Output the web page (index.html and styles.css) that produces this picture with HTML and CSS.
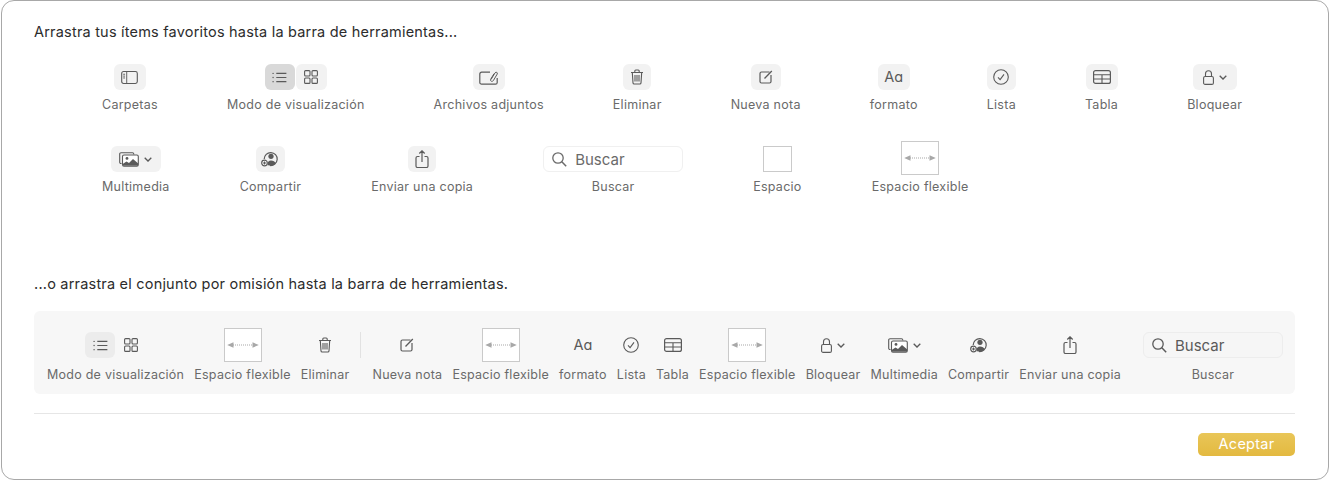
FILE: index.html
```html
<!DOCTYPE html>
<html lang="es">
  <head>
    <meta charset="UTF-8" />
    <meta name="viewport" content="width=device-width, initial-scale=1.0" />
    <title>Personalizar barra de herramientas</title>
    <link rel="stylesheet" href="styles.css">
  </head>
  <body>
    <svg class="sprite" width="0" height="0">
      <symbol id="i-sidebar" viewBox="0 0 18 14">
        <rect x="0.6" y="0.6" width="16.8" height="12.8" rx="2" fill="none" stroke="currentColor" stroke-width="1.2"></rect>
        <path d="M6 1v12M2.2 3.5h2M2.2 5.5h2M2.2 7.5h2" fill="none" stroke="currentColor" stroke-width="1"></path>
      </symbol>
      <symbol id="i-list" viewBox="0 0 16 12">
        <path d="M4.5 1.5h11M4.5 6h11M4.5 10.5h11" fill="none" stroke="currentColor" stroke-width="1.2"></path>
        <circle cx="1" cy="1.5" r="0.8" fill="currentColor"></circle>
        <circle cx="1" cy="6" r="0.8" fill="currentColor"></circle>
        <circle cx="1" cy="10.5" r="0.8" fill="currentColor"></circle>
      </symbol>
      <symbol id="i-grid" viewBox="0 0 14 14">
        <g fill="none" stroke="currentColor" stroke-width="1.1">
          <rect x="0.6" y="0.6" width="5.4" height="5.4" rx="1"></rect>
          <rect x="8" y="0.6" width="5.4" height="5.4" rx="1"></rect>
          <rect x="0.6" y="8" width="5.4" height="5.4" rx="1"></rect>
          <rect x="8" y="8" width="5.4" height="5.4" rx="1"></rect>
        </g>
      </symbol>
      <symbol id="i-attach" viewBox="0 0 19 15">
        <path d="M11 2.2H2.600A1.800 1.800 0 0 0 .8 4v8.400a1.800 1.800 0 0 0 1.800 1.800h13.800a1.800 1.800 0 0 0 1.800-1.800V8" fill="none" stroke="currentColor" stroke-width="1.2"></path>
        <path d="M12 9.500l4-6.600c1-1.500 3-.4 2.200 1.200l-3.800 6.400c-1.200 1.800-3.600.6-2.700-1.300l3.300-5.500" fill="none" stroke="currentColor" stroke-width="1"></path>
      </symbol>
      <symbol id="i-trash" viewBox="0 0 14 16">
        <path d="M1 3.500h12M4.800 3.300V2a1 1 0 0 1 1-1h2.400a1 1 0 0 1 1 1v1.300M2.300 3.500l.7 10.400a1.200 1.200 0 0 0 1.200 1.100h5.600a1.200 1.200 0 0 0 1.200-1.100l.7-10.400M5 6v6.500M7 6v6.500M9 6v6.500" fill="none" stroke="currentColor" stroke-width="1.1"></path>
      </symbol>
      <symbol id="i-note" viewBox="0 0 14 14">
        <path d="M10.500 2H2.500A1.500 1.500 0 0 0 1 3.500v8A1.500 1.500 0 0 0 2.500 13h8a1.500 1.500 0 0 0 1.500-1.500V5" fill="none" stroke="currentColor" stroke-width="1.2"></path>
        <path d="M5.500 8.500L12.800 1" fill="none" stroke="currentColor" stroke-width="1.3"></path>
      </symbol>
      <symbol id="i-check" viewBox="0 0 16 16">
        <circle cx="8" cy="8" r="7.3" fill="none" stroke="currentColor" stroke-width="1.1"></circle>
        <path d="M5 8.300l2.100 2.400L11 5.400" fill="none" stroke="currentColor" stroke-width="1.1"></path>
      </symbol>
      <symbol id="i-table" viewBox="0 0 18 14">
        <rect x="0.6" y="0.6" width="16.8" height="12.8" rx="2" fill="none" stroke="currentColor" stroke-width="1.2"></rect>
        <path d="M1 4.800h16M1 9h16M9 4.800V13.400" fill="none" stroke="currentColor" stroke-width="1.1"></path>
      </symbol>
      <symbol id="i-lock" viewBox="0 0 11 15">
        <rect x="0.6" y="6.5" width="9.8" height="7.9" rx="1.5" fill="none" stroke="currentColor" stroke-width="1.1"></rect>
        <path d="M2.500 6.500V3.800a3 3 0 0 1 6 0v2.700" fill="none" stroke="currentColor" stroke-width="1.1"></path>
      </symbol>
      <symbol id="i-chevron" viewBox="0 0 8 5">
        <path d="M0.700 0.800L4 4 7.300 0.800" fill="none" stroke="currentColor" stroke-width="1.3"></path>
      </symbol>
      <symbol id="i-media" viewBox="0 0 20 15">
        <path d="M2.500 11.500H2A1.300 1.300 0 0 1 0.700 10.200V2A1.300 1.300 0 0 1 2 0.700h11.500A1.300 1.300 0 0 1 14.800 2v.5" fill="none" stroke="currentColor" stroke-width="1.1"></path>
        <rect x="3.5" y="3" width="15.8" height="11.3" rx="1.5" fill="#fff" stroke="currentColor" stroke-width="1.1"></rect>
        <path d="M4 13.800v-2l3.500-2.400 2.500 1.500 4-3.800 5 4.200v2.500z" fill="currentColor"></path>
        <circle cx="8" cy="6.4" r="1.4" fill="currentColor"></circle>
      </symbol>
      <symbol id="i-share" viewBox="0 0 18 16">
        <path d="M3.200 8A6.500 6.500 0 1 1 9 14.500" fill="none" stroke="currentColor" stroke-width="1.2"></path>
        <circle cx="10" cy="5.3" r="2.6" fill="currentColor"></circle>
        <path d="M5.800 14c.3-3 2.200-4.600 4.200-4.600 2.200 0 4 1.200 4.900 2.700-1.200 1.600-3 2.600-5 2.600z" fill="currentColor"></path>
        <circle cx="3.5" cy="12" r="3.4" fill="#fff"></circle>
        <circle cx="3.5" cy="12" r="2.8" fill="none" stroke="currentColor" stroke-width="1.2"></circle>
        <path d="M2 12h3M3.500 10.500v3" fill="none" stroke="currentColor" stroke-width="1.1"></path>
      </symbol>
      <symbol id="i-send" viewBox="0 0 14 18">
        <path d="M4.500 6.500H2.500A1.500 1.500 0 0 0 1 8v8a1.500 1.500 0 0 0 1.500 1.500h9A1.500 1.500 0 0 0 13 16V8a1.500 1.500 0 0 0-1.500-1.500h-2M7 12V1M4.300 3.500L7 0.800l2.700 2.700" fill="none" stroke="currentColor" stroke-width="1.2"></path>
      </symbol>
      <symbol id="i-search" viewBox="0 0 15 15">
        <circle cx="6" cy="6" r="5.2" fill="none" stroke="currentColor" stroke-width="1.3"></circle>
        <path d="M9.800 9.800L14.200 14.200" fill="none" stroke="currentColor" stroke-width="1.5"></path>
      </symbol>
      <symbol id="i-flex" viewBox="0 0 32 8">
        <path d="M6 4h20" fill="none" stroke="currentColor" stroke-width="1.1" stroke-dasharray="1 1"></path>
        <path d="M0.200 4L6.500 1.300v5.400zM31.800 4L25.500 1.300v5.400z" fill="currentColor"></path>
      </symbol>
    </svg>

    <main class="sheet">
      <h2 class="lead">Arrastra tus ítems favoritos hasta la barra de herramientas...</h2>

      <div class="palette">
        <div class="palette-row">
          <div class="tool">
            <div class="btn w32"><svg class="ic" width="17" height="13"><use href="#i-sidebar"></use></svg></div>
            <span class="label">Carpetas</span>
          </div>
          <div class="tool">
            <div class="seg">
              <div class="btn w30 on"><svg class="ic" width="15" height="11"><use href="#i-list"></use></svg></div>
              <div class="btn w31"><svg class="ic" width="14" height="14"><use href="#i-grid"></use></svg></div>
            </div>
            <span class="label">Modo de visualización</span>
          </div>
          <div class="tool">
            <div class="btn w32"><svg class="ic" width="19" height="15"><use href="#i-attach"></use></svg></div>
            <span class="label">Archivos adjuntos</span>
          </div>
          <div class="tool">
            <div class="btn w28"><svg class="ic" width="14" height="16"><use href="#i-trash"></use></svg></div>
            <span class="label">Eliminar</span>
          </div>
          <div class="tool">
            <div class="btn w30"><svg class="ic" width="14" height="14"><use href="#i-note"></use></svg></div>
            <span class="label">Nueva nota</span>
          </div>
          <div class="tool">
            <div class="btn w32"><span class="aa">Aɑ</span></div>
            <span class="label">formato</span>
          </div>
          <div class="tool">
            <div class="btn w29"><svg class="ic" width="16" height="16"><use href="#i-check"></use></svg></div>
            <span class="label">Lista</span>
          </div>
          <div class="tool">
            <div class="btn w32"><svg class="ic" width="18" height="14"><use href="#i-table"></use></svg></div>
            <span class="label">Tabla</span>
          </div>
          <div class="tool">
            <div class="btn w44">
              <svg class="ic" width="11" height="15"><use href="#i-lock"></use></svg>
              <svg class="ic" width="8" height="5"><use href="#i-chevron"></use></svg>
            </div>
            <span class="label">Bloquear</span>
          </div>
        </div>

        <div class="palette-row palette-row-wide">
          <div class="tool">
            <div class="btn w50">
              <svg class="ic" width="20" height="15"><use href="#i-media"></use></svg>
              <svg class="ic" width="8" height="5"><use href="#i-chevron"></use></svg>
            </div>
            <span class="label">Multimedia</span>
          </div>
          <div class="tool">
            <div class="btn w29"><svg class="ic" width="18" height="16"><use href="#i-share"></use></svg></div>
            <span class="label">Compartir</span>
          </div>
          <div class="tool">
            <div class="btn w28"><svg class="ic" width="14" height="18"><use href="#i-send"></use></svg></div>
            <span class="label">Enviar una copia</span>
          </div>
          <div class="tool">
            <div class="search">
              <svg class="ic" width="15" height="15"><use href="#i-search"></use></svg>
              <span>Buscar</span>
            </div>
            <span class="label">Buscar</span>
          </div>
          <div class="tool">
            <div class="space"></div>
            <span class="label">Espacio</span>
          </div>
          <div class="tool">
            <div class="space flex"><svg class="arrows" width="32" height="8"><use href="#i-flex"></use></svg></div>
            <span class="label">Espacio flexible</span>
          </div>
        </div>
      </div>

      <h2 class="lead lead-set">...o arrastra el conjunto por omisión hasta la barra de herramientas.</h2>

      <div class="toolbar">
        <div class="tool">
          <div class="seg">
            <div class="btn w30 on-light"><svg class="ic" width="15" height="11"><use href="#i-list"></use></svg></div>
            <div class="btn w30 bare"><svg class="ic" width="14" height="14"><use href="#i-grid"></use></svg></div>
          </div>
          <span class="label">Modo de visualización</span>
        </div>
        <div class="tool">
          <div class="space flex"><svg class="arrows" width="32" height="8"><use href="#i-flex"></use></svg></div>
          <span class="label">Espacio flexible</span>
        </div>
        <div class="tool">
          <div class="btn w28 bare"><svg class="ic" width="14" height="16"><use href="#i-trash"></use></svg></div>
          <span class="label">Eliminar</span>
        </div>
        <div class="divider"></div>
        <div class="tool">
          <div class="btn w30 bare"><svg class="ic" width="14" height="14"><use href="#i-note"></use></svg></div>
          <span class="label">Nueva nota</span>
        </div>
        <div class="tool">
          <div class="space flex"><svg class="arrows" width="32" height="8"><use href="#i-flex"></use></svg></div>
          <span class="label">Espacio flexible</span>
        </div>
        <div class="tool">
          <div class="btn w32 bare"><span class="aa">Aɑ</span></div>
          <span class="label">formato</span>
        </div>
        <div class="tool">
          <div class="btn w29 bare"><svg class="ic" width="16" height="16"><use href="#i-check"></use></svg></div>
          <span class="label">Lista</span>
        </div>
        <div class="tool">
          <div class="btn w32 bare"><svg class="ic" width="18" height="14"><use href="#i-table"></use></svg></div>
          <span class="label">Tabla</span>
        </div>
        <div class="tool">
          <div class="space flex"><svg class="arrows" width="32" height="8"><use href="#i-flex"></use></svg></div>
          <span class="label">Espacio flexible</span>
        </div>
        <div class="tool">
          <div class="btn w44 bare">
            <svg class="ic" width="11" height="15"><use href="#i-lock"></use></svg>
            <svg class="ic" width="8" height="5"><use href="#i-chevron"></use></svg>
          </div>
          <span class="label">Bloquear</span>
        </div>
        <div class="tool">
          <div class="btn w50 bare">
            <svg class="ic" width="20" height="15"><use href="#i-media"></use></svg>
            <svg class="ic" width="8" height="5"><use href="#i-chevron"></use></svg>
          </div>
          <span class="label">Multimedia</span>
        </div>
        <div class="tool">
          <div class="btn w29 bare"><svg class="ic" width="18" height="16"><use href="#i-share"></use></svg></div>
          <span class="label">Compartir</span>
        </div>
        <div class="tool">
          <div class="btn w28 bare"><svg class="ic" width="14" height="18"><use href="#i-send"></use></svg></div>
          <span class="label">Enviar una copia</span>
        </div>
        <div class="tool tool-search">
          <div class="search search-dim">
            <svg class="ic" width="15" height="15"><use href="#i-search"></use></svg>
            <span>Buscar</span>
          </div>
          <span class="label">Buscar</span>
        </div>
      </div>

      <hr class="rule" />

      <div class="actions">
        <button class="accept">Aceptar</button>
      </div>
    </main>
  </body>
</html>
```

FILE: styles.css
```css
* {
  box-sizing: border-box;
}
html,
body {
  height: 100%;
}
body {
  margin: 0;
  background: #fff;
  font-family: Inter, "Liberation Sans", sans-serif;
  overflow: hidden;
}
.sprite {
  display: block;
}
.sheet {
  width: 1328px;
  height: 480px;
  margin-left: 1px;
  padding: 22px 33px 0 32px;
  background: #fff;
  border: 1px solid #a8a8a8;
  border-radius: 13px;
}
.lead {
  margin: 0;
  height: 17px;
  font-size: 14.5px;
  font-weight: 400;
  line-height: 17px;
  letter-spacing: 0.2px;
  color: #2c2c2c;
}
.lead-set {
  margin-top: 47px;
}
.palette {
  padding: 24px 0 0 68px;
}
.palette-row {
  display: flex;
  gap: 69px;
  height: 82px;
}
.palette-row-wide {
  gap: 70px;
}
.tool {
  display: flex;
  flex-direction: column;
  align-items: center;
}
.label {
  margin-top: 7px;
  font-size: 12.5px;
  line-height: 15px;
  letter-spacing: 0.27px;
  color: #6a6a6a;
  white-space: nowrap;
}
.btn {
  display: flex;
  align-items: center;
  justify-content: center;
  gap: 5px;
  height: 26px;
  background: #f2f2f2;
  border-radius: 6px;
  color: #5a5a5a;
}
.w28 { width: 28px; }
.w29 { width: 29px; }
.w30 { width: 30px; }
.w31 { width: 31px; }
.w32 { width: 32px; }
.w44 { width: 44px; }
.w50 { width: 50px; }
.on {
  background: #d9d9d9;
}
.on-light {
  background: #ececec;
}
.bare {
  background: transparent;
}
.seg {
  display: flex;
  gap: 1px;
}
.ic {
  display: block;
}
.aa {
  font-size: 14.5px;
  line-height: 16px;
}
.search {
  display: flex;
  align-items: center;
  gap: 8px;
  width: 140px;
  height: 26px;
  padding-left: 8px;
  background: #fff;
  border: 1px solid #f0f0f0;
  border-radius: 6px;
  color: #6a6a6a;
  font-size: 15px;
}
.search-dim {
  background: #f6f6f6;
  border-color: #ededed;
  color: #5a5a5a;
}
.space {
  display: flex;
  align-items: center;
  justify-content: center;
  width: 29px;
  height: 26px;
  background: #fff;
  border: 1px solid #cacaca;
}
.space.flex {
  width: 38px;
  height: 34px;
  margin: -5px 0 -3px;
  color: #a8a8a8;
}
.toolbar {
  display: flex;
  align-items: flex-start;
  gap: 10px;
  height: 83px;
  margin-top: 19px;
  padding: 21px 0 0 13px;
  background: #f7f7f7;
  border-radius: 6px;
}
.toolbar .label {
  margin-top: 9px;
  letter-spacing: 0.25px;
}
.toolbar .space.flex {
  margin: -4px 0;
}
.divider {
  width: 1px;
  height: 26px;
  background: #e2e2e2;
  margin: 0 1px;
}
.tool-search {
  margin-left: 12px;
}
.rule {
  height: 1px;
  margin: 19px 0 0;
  border: 0;
  background: #e6e6e6;
}
.actions {
  display: flex;
  justify-content: flex-end;
  margin-top: 19px;
}
.accept {
  width: 97px;
  height: 23px;
  padding: 0 0 2px;
  border: 0;
  border-radius: 5px;
  background: linear-gradient(#e9c658, #e3b940);
  color: #fff;
  font-family: inherit;
  font-size: 14.5px;
  line-height: 21px;
  letter-spacing: 0.25px;
}
```
